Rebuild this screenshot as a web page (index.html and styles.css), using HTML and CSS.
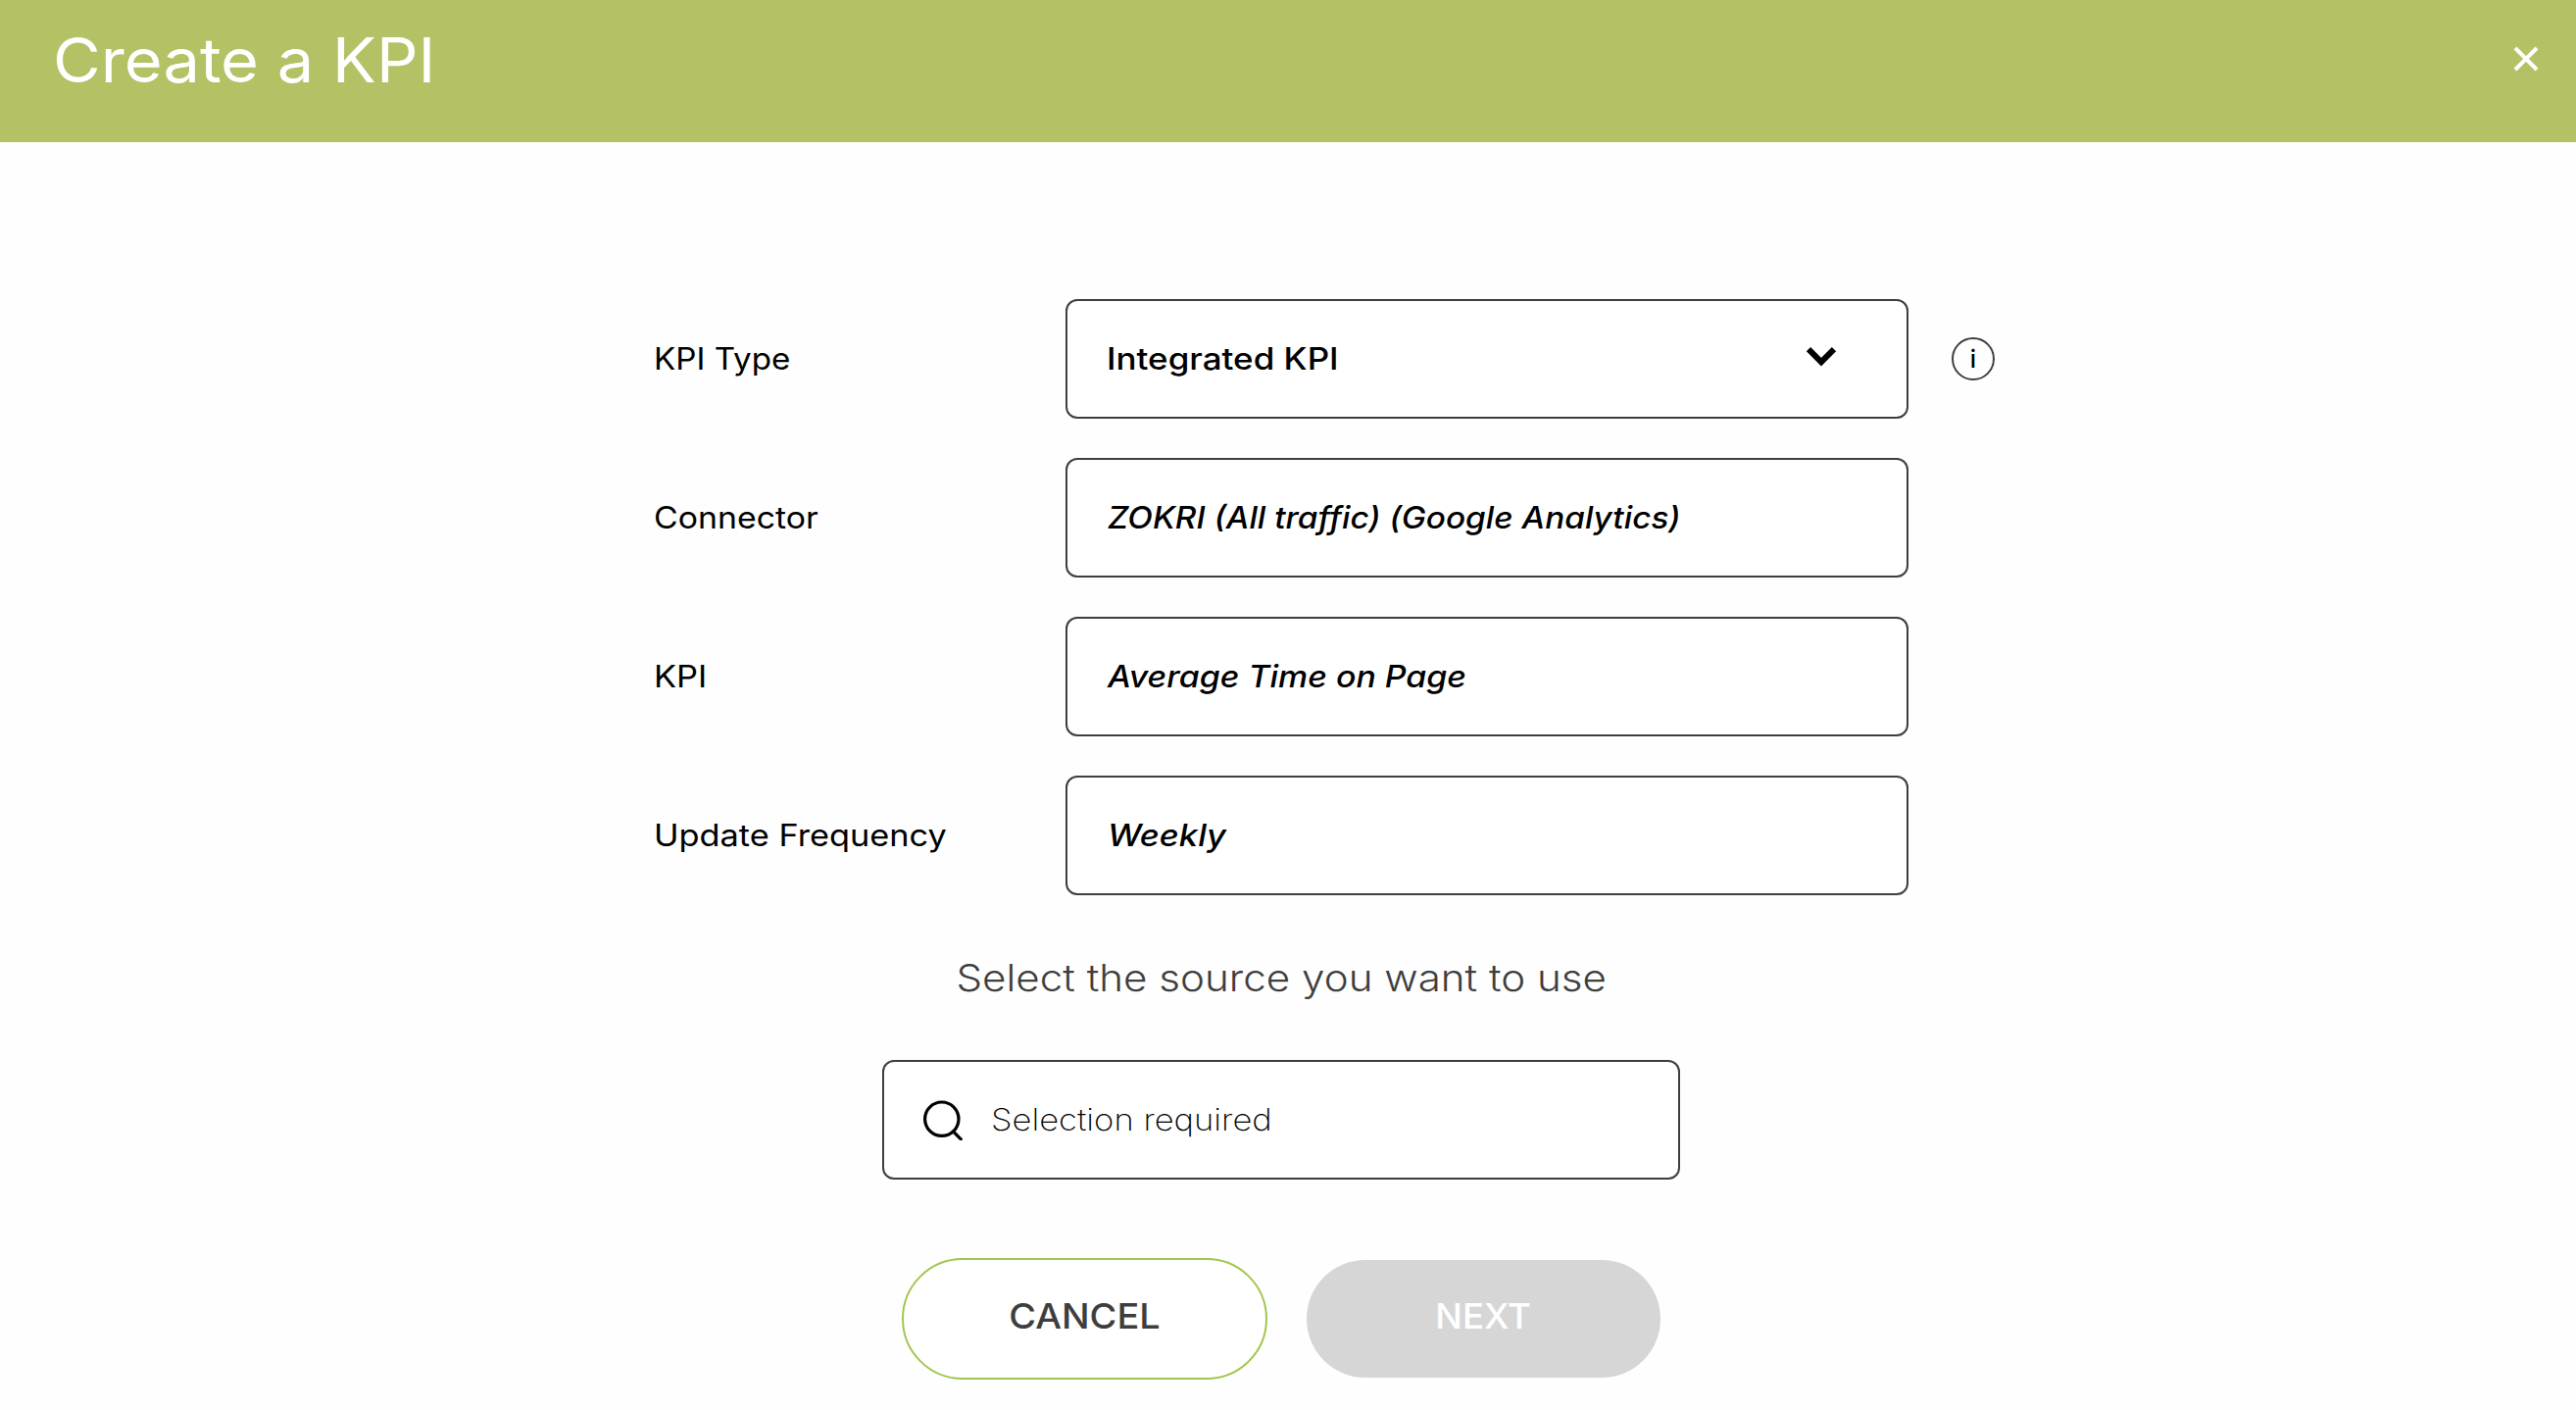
FILE: index.html
```html
<!DOCTYPE html>
<html lang="en">
<head>
<meta charset="utf-8">
<title>Create a KPI</title>
<link rel="stylesheet" href="styles.css">
</head>
<body>
<header class="header">
  <h1 class="title"><span class="wide">Create a KPI</span></h1>
  <button class="close" aria-label="Close">
    <svg width="26" height="26" viewBox="0 0 26 26"><path d="M2 2 24 24M24 2 2 24" fill="none" stroke="#fff" stroke-width="4"/></svg>
  </button>
</header>
<main class="main">
  <section class="fields">
    <div class="row">
      <div class="label kpi-type"><span class="wide">KPI Type</span></div>
      <div class="field select"><span class="wide">Integrated KPI</span>
        <svg width="32" height="22" viewBox="0 0 32 22"><path d="M3 3.2 16 16.2 29 3.2" fill="none" stroke="#000" stroke-width="6"/></svg>
      </div>
      <div class="info">i</div>
    </div>
    <div class="row">
      <div class="label"><span class="wide">Connector</span></div>
      <div class="field value connector"><span class="wide">ZOKRI (All traffic) (Google Analytics)</span></div>
    </div>
    <div class="row">
      <div class="label kpi"><span class="wide">KPI</span></div>
      <div class="field value"><span class="wide">Average Time on Page</span></div>
    </div>
    <div class="row">
      <div class="label frequency"><span class="wide">Update Frequency</span></div>
      <div class="field value weekly"><span class="wide">Weekly</span></div>
    </div>
  </section>
  <section class="source">
    <h2 class="prompt"><span class="wide">Select the source you want to use</span></h2>
    <div class="search">
      <svg width="42" height="42" viewBox="0 0 42 42" fill="none" stroke="#000"><circle cx="19.8" cy="20.2" r="17.2" stroke-width="3.2"/><path d="M31.5 33 39.3 40.8" stroke-width="3.2" stroke-linecap="round"/></svg>
      <span class="wide">Selection required</span>
    </div>
    <div class="actions">
      <button class="button cancel"><span class="wide">CANCEL</span></button>
      <button class="button next" disabled><span class="wide">NEXT</span></button>
    </div>
  </section>
</main>
</body>
</html>
```

FILE: styles.css
```css
* {
  box-sizing: border-box;
}

body {
  margin: 0;
  background: #fefefe;
  color: #000;
  font-family: Inter, sans-serif;
  font-size: 31px;
}

/* Slightly extended letterforms; each text sets its own --stretch */
.wide {
  display: inline-block;
  transform: scaleX(var(--stretch));
  transform-origin: left center;
}

.header {
  display: flex;
  justify-content: space-between;
  align-items: flex-start;
  height: 145px;
  padding: 0 38px 0 54px;
  background: #b4c165;
}

.title {
  --stretch: 1.06;
  margin: 0;
  color: #fff;
  font-size: 63px;
  font-weight: 400;
  line-height: 122px;
}

.close {
  display: flex;
  margin-top: 47px;
  padding: 0;
  border: 0;
  background: none;
}

.main {
  padding-top: 160px;
}

.fields {
  display: flex;
  flex-direction: column;
  gap: 40px;
  margin-left: 667px;
}

.row {
  display: flex;
  align-items: center;
  height: 122px;
}

.label {
  --stretch: 1.091;
  width: 420px;
  padding-bottom: 2px;
  white-space: nowrap;
}

.label.kpi-type {
  --stretch: 1.07;
}

.label.kpi {
  --stretch: 1.11;
}

.label.frequency {
  --stretch: 1.107;
}

.field {
  display: flex;
  align-items: center;
  width: 860px;
  height: 122px;
  padding-bottom: 2px;
  border: 2px solid #3e3e3e;
  border-radius: 12px;
  background: #fff;
  white-space: nowrap;
}

.select {
  --stretch: 1.128;
  justify-content: space-between;
  padding: 0 71px 2px 40px;
  font-weight: 500;
}

.select svg {
  margin-bottom: 2px;
}

.value {
  --stretch: 1.093;
  padding-left: 41px;
  font-style: italic;
  font-weight: 500;
}

.value.connector {
  --stretch: 1.077;
}

.value.weekly {
  --stretch: 1.112;
}

.info {
  display: flex;
  align-items: center;
  justify-content: center;
  width: 44px;
  height: 44px;
  margin-left: 44px;
  border: 2px solid #3e3e3e;
  border-radius: 50%;
  font-size: 25px;
  font-weight: 500;
}

.source {
  display: flex;
  flex-direction: column;
  align-items: center;
  width: 814px;
  margin: 44px 0 0 900px;
}

.prompt {
  --stretch: 1.094;
  margin: 0;
  color: #3e3e3e;
  font-size: 38.5px;
  font-weight: 300;
  line-height: 80px;
  white-space: nowrap;
}

.prompt .wide,
.button .wide {
  transform-origin: center;
}

.search {
  --stretch: 1.116;
  display: flex;
  align-items: center;
  gap: 28px;
  width: 814px;
  height: 122px;
  margin-top: 44px;
  padding-left: 39px;
  border: 2px solid #3e3e3e;
  border-radius: 12px;
  background: #fff;
  font-weight: 200;
}

.search .wide {
  margin-bottom: 2px;
}

.actions {
  display: flex;
  align-items: center;
  gap: 40px;
  margin-top: 80px;
}

.button {
  padding: 0 0 6px;
  border: 0;
  border-radius: 62px;
  font-family: inherit;
  font-size: 36px;
  font-weight: 500;
}

.cancel {
  --stretch: 1.052;
  width: 373px;
  height: 124px;
  border: 2px solid #a1c64f;
  background: #fff;
  color: #3e3e3e;
}

.next {
  --stretch: 1.014;
  width: 361px;
  height: 120px;
  background: #d6d6d6;
  color: #fff;
}
```
